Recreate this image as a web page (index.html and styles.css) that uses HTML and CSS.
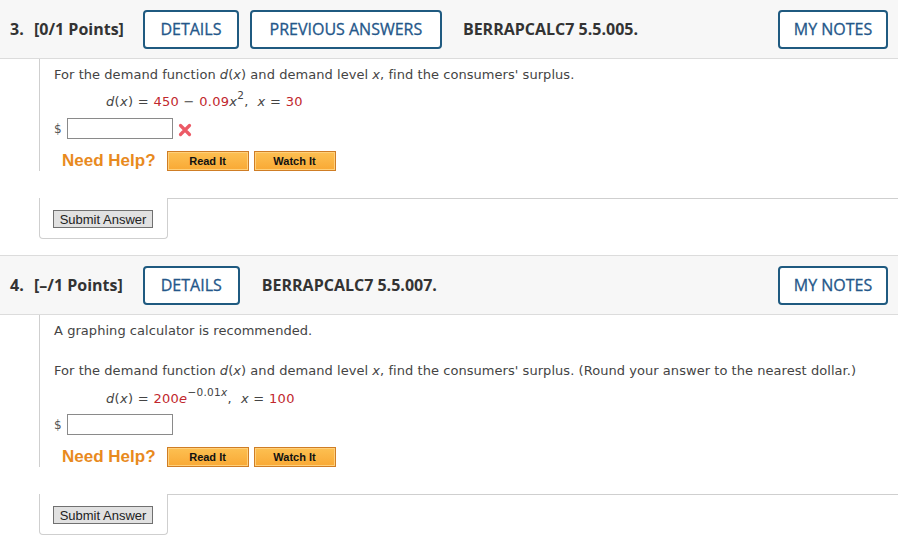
FILE: index.html
```html
<!DOCTYPE html>
<html>
<head>
<meta charset="utf-8">
<link rel="stylesheet" href="styles.css">
</head>
<body>
<div class="question q3">
  <div class="qhead">
    <span class="qnum">3.</span><span class="pts">[0/1 Points]</span>
    <span class="hbtn w-details">DETAILS</span>
    <span class="hbtn w-prev">PREVIOUS ANSWERS</span>
    <span class="code">BERRAPCALC7 5.5.005.</span>
    <span class="spacer"></span>
    <span class="hbtn w-notes">MY NOTES</span>
  </div>
  <div class="qbody">
    <div class="qcontent">
      <p class="txt t1">For the demand function <i>d</i>(<i>x</i>) and demand level <i>x</i>, find the consumers' surplus.</p>
      <p class="math m1"><i>d</i>(<i>x</i>) = <span class="red">450</span> − <span class="red">0.09</span><i>x</i><sup>2</sup>,&nbsp; <i>x</i> = <span class="red">30</span></p>
      <div class="ans a1"><span class="dollar">$</span><span class="inp"></span>
        <svg class="xmark" width="14" height="14" viewBox="0 0 14 14"><path d="M2.5 2.5 L11.5 11.5 M11.5 2.5 L2.5 11.5" stroke="#ec5a66" stroke-width="3.2" stroke-linecap="round"/></svg>
      </div>
      <div class="help h1"><span class="needhelp">Need Help?</span><span class="obtn">Read It</span><span class="obtn">Watch It</span></div>
    </div>
    <div class="subrow s1">
      <div class="subtab"><span class="subbtn">Submit Answer</span></div>
      <div class="subfill"></div>
    </div>
  </div>
</div>

<div class="question q4">
  <div class="qhead">
    <span class="qnum">4.</span><span class="pts">[–/1 Points]</span>
    <span class="hbtn w-details2">DETAILS</span>
    <span class="code code2">BERRAPCALC7 5.5.007.</span>
    <span class="spacer"></span>
    <span class="hbtn w-notes">MY NOTES</span>
  </div>
  <div class="qbody">
    <div class="qcontent">
      <p class="txt t1">A graphing calculator is recommended.</p>
      <p class="txt t2">For the demand function <i>d</i>(<i>x</i>) and demand level <i>x</i>, find the consumers' surplus. (Round your answer to the nearest dollar.)</p>
      <p class="math m2"><i>d</i>(<i>x</i>) = <span class="red">200<i>e</i></span><sup><span>−0.01</span><i>x</i></sup>,&nbsp; <i>x</i> = <span class="red">100</span></p>
      <div class="ans a2"><span class="dollar">$</span><span class="inp"></span></div>
      <div class="help h1"><span class="needhelp">Need Help?</span><span class="obtn">Read It</span><span class="obtn">Watch It</span></div>
    </div>
    <div class="subrow s2">
      <div class="subtab"><span class="subbtn">Submit Answer</span></div>
      <div class="subfill"></div>
    </div>
  </div>
</div>
</body>
</html>
```

FILE: styles.css
```css
* { box-sizing: border-box; }
html, body { margin: 0; padding: 0; background: #fff; }
body { width: 898px; overflow: hidden; }

.q3 { margin-top: -1px; }
.q4 { margin-top: 16px; }

.qhead {
  height: 60px;
  background: #f7f7f7;
  border-top: 1px solid #dcdcdc;
  border-bottom: 1px solid #dcdcdc;
  display: flex;
  align-items: center;
  padding: 0 10px;
  font-family: "Open Sans", sans-serif;
  color: #333;
}
.qnum { font-weight: 700; font-size: 16px; width: 24px; }
.pts { font-weight: 700; font-size: 16px; }
.hbtn {
  height: 39px;
  border: 2px solid #1f5a80;
  border-radius: 4px;
  background: #fff;
  color: #24578a;
  font-size: 16px;
  -webkit-text-stroke: 0.3px #24578a;
  display: flex;
  align-items: center;
  justify-content: center;
}
.w-details { width: 96px; margin-left: 19px; }
.w-prev { width: 192px; margin-left: 11px; }
.w-details2 { width: 97px; margin-left: 20px; }
.w-notes { width: 110px; }
.code { font-weight: 700; font-size: 16px; margin-left: 21px; }
.code2 { margin-left: 22px; }
.spacer { flex: 1; }

.qbody { margin-left: 39px; }
.qcontent {
  border-left: 1px solid #cfcfcf;
  padding: 7px 0 0 14px;
  font-family: "DejaVu Sans", sans-serif;
  font-size: 13px;
  color: #444;
}
.txt { margin: 0; line-height: 18px; height: 18px; white-space: nowrap; letter-spacing: 0.05px; }
.q4 .t2 { margin-top: 22px; }
.math { margin: 9px 0 0 52px; line-height: 18px; height: 18px; white-space: nowrap; letter-spacing: 0.3px; }
.q4 .math { margin-top: 10px; }
.math sup { font-size: 10.5px; line-height: 0; vertical-align: 7px; }
.red { color: #c1272d; }
.ans { display: flex; align-items: center; margin-top: 7px; height: 21px; }
.q4 .ans { margin-top: 6px; }
.dollar { width: 13px; font-size: 12px; color: #555; }
.inp { width: 106px; height: 21px; border: 1px solid #8a8a8a; background: #fff; }
.xmark { margin-left: 5px; margin-top: 2px; }
.help { display: flex; align-items: center; margin-top: 12px; height: 20px; }
.needhelp {
  font-family: "Liberation Sans", Arial, sans-serif;
  font-weight: 700;
  font-size: 17px;
  color: #e88a1e;
  margin-left: 8px;
  margin-right: 11px;
}
.obtn {
  width: 82px;
  height: 20px;
  margin-right: 5px;
  border: 1px solid #cf7d25;
  box-shadow: inset 0 0 0 1px #ffd07a;
  background: linear-gradient(#fdc052, #f9a935);
  font-family: "Liberation Sans", Arial, sans-serif;
  font-weight: 700;
  font-size: 11px;
  color: #111;
  display: flex;
  align-items: center;
  justify-content: center;
}

.subrow { display: flex; margin-top: 27px; }
.q4 .subrow { margin-top: 27px; }
.subtab {
  width: 129px;
  height: 41px;
  border-left: 1px solid #cfcfcf;
  border-right: 1px solid #cfcfcf;
  border-bottom: 1px solid #cfcfcf;
  border-radius: 0 0 4px 4px;
  padding: 12px 0 0 13px;
}
.subfill { flex: 1; border-top: 1px solid #cfcfcf; margin-left: -1px; }
.subbtn {
  display: flex;
  align-items: center;
  justify-content: center;
  width: 100px;
  height: 18px;
  background: #e1e1e1;
  border: 1px solid #707070;
  font-family: "Liberation Sans", Arial, sans-serif;
  font-size: 13px;
  color: #222;
}
```
